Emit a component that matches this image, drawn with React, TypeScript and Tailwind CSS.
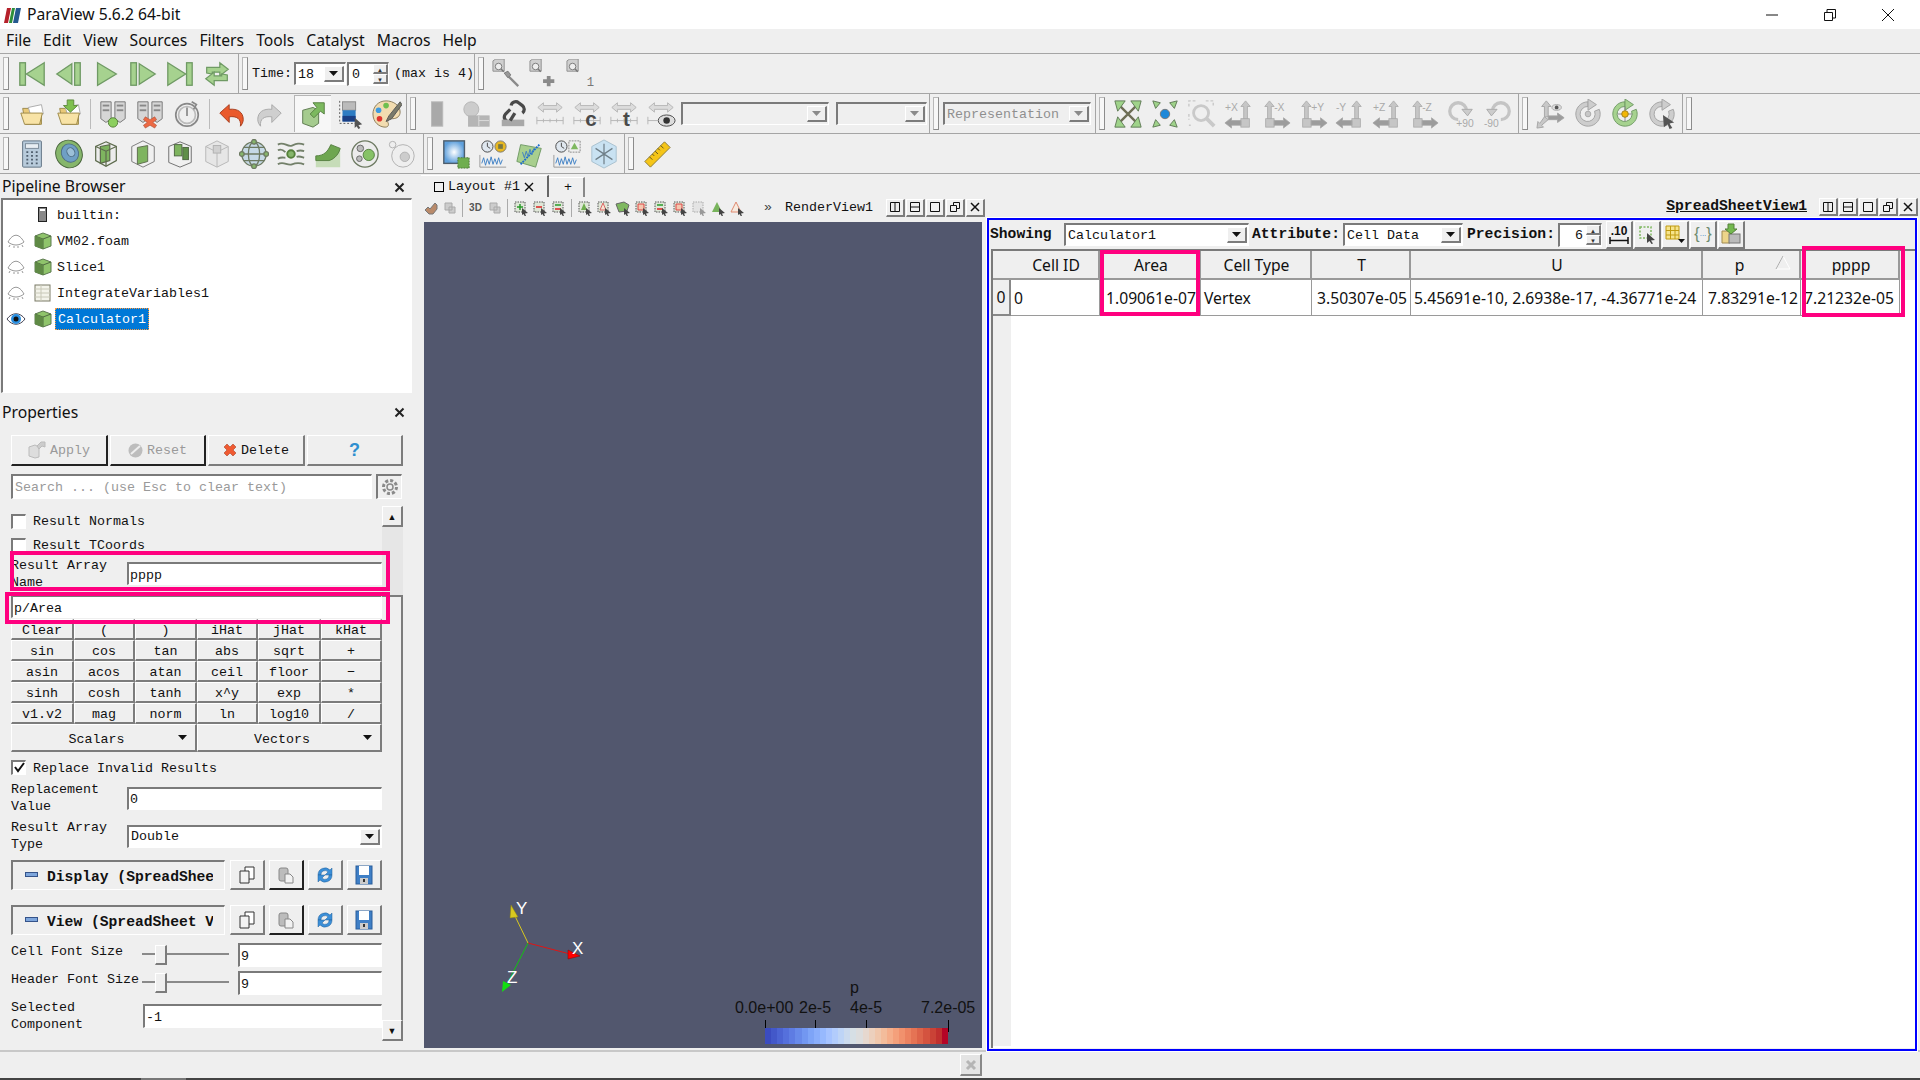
import type { ReactNode } from "react"

const mono = "font-['Liberation_Mono',monospace] text-[13.33px] leading-[17px]"
const boldMono = "font-['Liberation_Mono',monospace] text-[14.67px] font-bold leading-[17px]"
const ui = "font-['Noto_Sans',sans-serif] text-[15.7px]"
const edge = "border-t-2 border-l-2 border-t-[#7a7a7a] border-l-[#7a7a7a] border-r border-b border-r-white border-b-white"
const sunken = `${edge} bg-white`
const raised = "border-t border-l border-t-white border-l-white border-r-2 border-b-2 border-r-[#7c7c7c] border-b-[#7c7c7c] bg-[#efefef]"
const raisedDark = "border-t border-l border-t-white border-l-white border-r-2 border-b-2 border-r-[#222] border-b-[#222] bg-[#efefef]"

const G = "#a6d28f"
const GS = "#6f9a64"
const D = "#cdcdcd"
const DS = "#a2a2a2"

const Svg = ({ children, size = 30 }: { children: ReactNode; size?: number }) => (
  <svg width={size} height={size} viewBox="0 0 32 32">{children}</svg>
)

const Down = ({ color = "#111" }: { color?: string }) => (
  <svg width="9" height="5" viewBox="0 0 9 5"><path d="M0 0h9L4.500 5z" fill={color} /></svg>
)

const Folder = () => (
  <g stroke="#9b8748" strokeWidth="1">
    <path d="M5 10h8l2 3h10v14H8z" fill="#e9c978" />
    <path d="M11 9l14-3 2 10-13 3z" fill="#fff" stroke="#aaa" />
    <path d="M3 15h23l-3 12H7z" fill="#f8e3a6" />
  </g>
)
const Tower = ({ x }: { x: number }) => (
  <g stroke="#757575" fill="#d6d6d6">
    <path d={`M${x} 3h11v18l-5.500 4-5.500-4z`} />
    <rect x={x + 2} y="6" width="7" height="2" fill="#888" stroke="none" />
    <rect x={x + 2} y="11" width="7" height="2" fill="#888" stroke="none" />
  </g>
)
const Cube = ({ fill = "#7eb45f", stroke = "#5d6b4d" }: { fill?: string; stroke?: string }) => (
  <g stroke={stroke} strokeWidth="1.3">
    <path d="M16 3l11 5v15l-11 6-11-6V8z" fill="#ececec" />
    <path d="M10 8l10-2v17l-10 3z" fill={fill} />
    <path d="M5 8l11 5 11-5M16 13v16" fill="none" />
  </g>
)
const Axes = ({ label, flip }: { label: string; flip?: boolean }) => (
  <g fill="#c6c6c6" stroke="#a5a5a5" strokeWidth="0.8">
    <g transform={flip ? "translate(32 0) scale(-1 1)" : undefined}>
      <path d="M7 22V8H4l5-6 5 6h-3v14z" />
      <rect x="5" y="21" width="9" height="9" />
      <path d="M14 23h10v-3l7 5.500-7 5.500v-3H14z" fill="#9c9c9c" />
    </g>
    <text x={flip ? 1 : 14} y="13" fontSize="11" fill="#aaa" stroke="none" fontFamily="Liberation Sans">{label}</text>
  </g>
)
const Range = () => (
  <g fill="#dcdcdc" stroke="#b5b5b5">
    <path d="M3 9l6-5v3h14V4l6 5-6 5v-3H9v3z" />
    <path d="M2 19v8M2 23h28M30 19v8M9 21v4M16 21v4M23 21v4" fill="none" />
  </g>
)
const Ring = ({ color = D, stroke = DS }: { color?: string; stroke?: string }) => (
  <g>
    <path d="M16 3a13 13 0 1 0 12 8l-5 2a8 8 0 1 1-7-5z" fill={color} stroke={stroke} />
    <path d="M16 0l9 6-9 6z" fill={color} stroke={stroke} />
  </g>
)
const Lens = () => (
  <g>
    <path d="M1 2l3-2h9v13H1z" fill="#cfcfcf" stroke="#8f8f8f" />
    <circle cx="7" cy="8" r="3.500" fill="#eee" stroke="#777" />
    <path d="M9.500 10.500l3 3" stroke="#777" strokeWidth="1.500" />
  </g>
)

const icons: Record<string, ReactNode> = {
  first: <g fill={G} stroke={GS} strokeWidth="1.4"><rect x="3" y="4" width="6" height="24" /><path d="M29 4L10 16l19 12z" /></g>,
  back: <g fill={G} stroke={GS} strokeWidth="1.4"><path d="M19 5L3 16l16 11z" /><rect x="22" y="4" width="6" height="24" /></g>,
  play: <path d="M7 4l20 12L7 28z" fill={G} stroke={GS} strokeWidth="1.4" />,
  next: <g fill={G} stroke={GS} strokeWidth="1.4"><rect x="3" y="4" width="6" height="24" /><path d="M12 5l17 11-17 11z" /></g>,
  last: <g fill={G} stroke={GS} strokeWidth="1.4"><path d="M3 4l19 12L3 28z" /><rect x="23" y="4" width="6" height="24" /></g>,
  loop: <g fill={G} stroke={GS} strokeWidth="1.3"><path d="M5 15V9h14V4l9 7-9 7v-4H11v2z" /><path d="M27 17v6H13v5l-9-7 9-7v4h8v-2z" /></g>,
  open: <Folder />,
  load: <g><Folder /><path d="M13 1h7v6h4l-7.500 7L9 7h4z" fill="#7fc04f" stroke="#5d8a3c" /></g>,
  connect: <g><Tower x={3} /><Tower x={18} /><circle cx="16" cy="25" r="5" fill="#8ccf5f" stroke="#55803a" /></g>,
  disconnect: <g><Tower x={3} /><Tower x={18} /><path d="M11 19l5 3 5-3 2 3-4 3 4 3-2 3-5-3-5 3-2-3 4-3-4-3z" fill="#ec6a45" stroke="#a5492e" strokeWidth="0.6" /></g>,
  power: <g fill="none" stroke="#888" strokeWidth="1.8"><circle cx="16" cy="17" r="12" /><circle cx="16" cy="17" r="9" stroke="#bbb" /><path d="M16 9v9" /><path d="M21 3l5 3-3 5" /></g>,
  undo: <path d="M3 15l10-9v5c9-1 15 3 15 11 0 3-2 6-3 7 1-8-4-11-12-10v6z" fill="#ea5a2c" stroke="#a63c1c" />,
  redo: <path d="M29 15L19 6v5c-9-1-15 3-15 11 0 3 2 6 3 7-1-8 4-11 12-10v6z" fill="#cfcfcf" stroke="#a8a8a8" />,
  link: <g><path d="M5 12l11-3 6 3v14l-6 4-11-4z" fill="#a5cb8e" stroke="#5d7a50" /><path d="M16 4h12v12l-4-3-7 7-4-4 7-7z" fill="#7cb95f" stroke="#557f41" /></g>,
  legend: <g><rect x="8" y="3" width="14" height="9" fill="#bbb" stroke="#888" /><rect x="8" y="12" width="14" height="12" fill="#2e7cc3" /><rect x="8" y="18" width="14" height="6" fill="#1b3f85" /><path d="M5 2v24h20" fill="none" stroke="#555" strokeDasharray="2 2" /><path d="M21 20l8 7-4 1 2 3-2 1-2-3-2 2z" fill="#555" /></g>,
  palette: <g><path d="M15 2C6 2 1 9 1 16c0 9 7 14 13 14 4 0 4-3 3-5-1-3 2-4 5-4 5 0 8-3 8-7C30 7 23 2 15 2z" fill="#f2dcb0" stroke="#8a7a58" /><circle cx="7" cy="12" r="3" fill="#3e9be0" /><circle cx="15" cy="7" r="3" fill="#6fbf4f" /><circle cx="8" cy="21" r="3" fill="#e0352f" /><path d="M30 3L18 18l-3 6 6-3L32 6z" fill="#7a7a6a" stroke="#555" /></g>,
  column: <rect x="8" y="3" width="12" height="26" fill="#a9a9a9" stroke="#b9b9b9" />,
  sphereBox: <g fill="#ccc" stroke="#b5b5b5"><circle cx="11" cy="11" r="8" /><rect x="8" y="18" width="22" height="11" fill="#b5b5b5" /><path d="M19 23h11M19 18v11" stroke="#ddd" /></g>,
  broken: <g fill="none" stroke="#4a4a4a" strokeWidth="3.500"><path d="M14 7a5 5 0 0 1 8-3l4 3a5 5 0 0 1 0 8" /><path d="M10 24a5 5 0 0 1-2-8l5-5" /><rect x="4" y="22" width="24" height="7" fill="#a8a8a8" stroke="none" /><path d="M18 15l-5 8" stroke="#4a4a4a" /></g>,
  range: <Range />,
  rangeC: <g><Range /><text x="14" y="29" fontSize="22" fontWeight="bold" fill="#4a4a4a" fontFamily="Liberation Sans">c</text></g>,
  rangeT: <g><Range /><text x="15" y="29" fontSize="22" fontWeight="bold" fill="#4a4a4a" fontFamily="Liberation Sans">t</text></g>,
  rangeEye: <g><path d="M3 9l6-5v3h14V4l6 5-6 5v-3H9v3z" fill="#dcdcdc" stroke="#b5b5b5" /><path d="M2 19v8M2 23h10" stroke="#b5b5b5" /><ellipse cx="22" cy="23" rx="9" ry="6" fill="#ddd" stroke="#444" /><circle cx="22" cy="23" r="3.500" fill="#333" /></g>,
  reset: <g><path d="M6 6l20 20M26 6L6 26" stroke="#6d6d55" strokeWidth="2.500" /><g fill="#9fd38a" stroke="#5f7a55"><path d="M2 2h11l-8 11z" /><path d="M30 2H19l8 11z" /><path d="M2 30h11l-8-11z" /><path d="M30 30H19l8-11z" /></g></g>,
  zoomData: <g><circle cx="16" cy="16" r="5" fill="#1e88d8" stroke="#777" /><g fill="#9fd38a" stroke="#5f7a55"><path d="M3 2l8 2-5 6z" /><path d="M29 2l-8 2 5 6z" /><path d="M3 30l8-2-5-6z" /><path d="M29 30l-8-2 5-6z" /></g></g>,
  zoomBox: <g fill="none" stroke="#c9c9c9"><path d="M2 8V2h7M20 2h8v6M2 16v6M2 28h2" strokeWidth="1.5" strokeDasharray="3 2" /><circle cx="15" cy="15" r="8" strokeWidth="3" /><path d="M21 21l8 8" strokeWidth="4" /></g>,
  xp: <Axes label="+X" flip />,
  xm: <Axes label="-X" />,
  yp: <Axes label="+Y" />,
  ym: <Axes label="-Y" flip />,
  zp: <Axes label="+Z" flip />,
  zm: <Axes label="-Z" />,
  cw: <g><path d="M22 13a9 9 0 1 0-9 9" fill="none" stroke="#c4c4c4" strokeWidth="3.500" /><path d="M17 11h11l-5 7z" fill="#ccc" stroke="#aaa" /><text x="11" y="30" fontSize="11" fill="#aaa" fontFamily="Liberation Sans">+90</text></g>,
  ccw: <g><path d="M10 13a9 9 0 1 1 9 9" fill="none" stroke="#c4c4c4" strokeWidth="3.500" /><path d="M15 11H4l5 7z" fill="#ccc" stroke="#aaa" /><text x="1" y="30" fontSize="11" fill="#aaa" fontFamily="Liberation Sans">-90</text></g>,
  axisEye: <g fill="#c8c8c8" stroke="#a5a5a5"><path d="M9 19V8H6l5-6 5 6h-3v11z" /><path d="M13 18h10v-3l7 5-7 5v-3H13z" fill="#9c9c9c" /><path d="M9 19l4 3-7 6 2 2-7 1 1-7 2 2z" /><ellipse cx="22" cy="9" rx="5" ry="3" fill="#ddd" /><circle cx="22" cy="9" r="2" fill="#555" stroke="none" /></g>,
  center: <g><Ring /><circle cx="16" cy="16" r="3" fill="#c8c8c8" stroke="#aaa" /></g>,
  pick: <g><Ring color={G} stroke={GS} /><path d="M16 8v16M8 16h16" stroke="#888" /><circle cx="16" cy="16" r="3.500" fill="#f2b705" stroke="#a08020" /></g>,
  pickMouse: <g><Ring /><path d="M17 17l12 8-5 1 3 5-3 1-2-5-4 3z" fill="#555" /></g>,
  calc: <g><rect x="6" y="2" width="20" height="28" rx="1" fill="#b8cbdb" stroke="#5d6f80" /><rect x="9" y="5" width="14" height="5" fill="#e8eef3" stroke="#7a8a98" /><path d="M10 14h2M15 14h2M20 14h2M10 18h2M15 18h2M20 18h2M10 22h2M15 22h2M20 22h2M10 26h2M15 26h2M20 26h2" stroke="#4d5d6c" strokeWidth="2" /></g>,
  contour: <g><ellipse cx="16" cy="16" rx="14" ry="15" transform="rotate(-30 16 16)" fill="#86b66b" stroke="#47633b" /><ellipse cx="17" cy="15" rx="9" ry="10" transform="rotate(-30 17 15)" fill="#6f9fc4" stroke="#4f6f86" /><ellipse cx="18" cy="14" rx="4" ry="5" transform="rotate(-30 18 14)" fill="#9cc0d8" stroke="#4f6f86" /></g>,
  clip: <Cube />,
  slice: <g><path d="M16 2l12 6v16l-12 6-12-6V8z" fill="#f0f0f0" stroke="#777" /><path d="M10 9l11-2v17l-11 3z" fill="#7eb45f" stroke="#5d6b4d" /></g>,
  extract: <g><path d="M4 8l12-5 12 5v17l-12 5-12-5z" fill="#f0f0f0" stroke="#6d6d6d" /><rect x="10" y="6" width="8" height="12" fill="#7eb45f" stroke="#4d6640" /><rect x="19" y="9" width="6" height="13" fill="#5f8f48" stroke="#4d6640" /></g>,
  cubeGray: <g><path d="M16 2l12 6v16l-12 6-12-6V8z" fill="#e6e6e6" stroke="#b5b5b5" /><path d="M4 8l12 6 12-6M16 14v16" fill="none" stroke="#b5b5b5" /><rect x="12" y="7" width="8" height="8" fill="#d0d0d0" stroke="#b0b0b0" /></g>,
  globe: <g fill="none" stroke="#6d7a62" strokeWidth="1.400"><circle cx="16" cy="16" r="13" fill="#c6d9e6" /><ellipse cx="16" cy="16" rx="6" ry="13" /><path d="M3 16h26M5 9h22M5 23h22" /><circle cx="16" cy="3" r="2.500" fill="#86b66b" /><circle cx="3" cy="16" r="2.500" fill="#86b66b" /><circle cx="29" cy="16" r="2.500" fill="#86b66b" /><circle cx="16" cy="29" r="2.500" fill="#86b66b" /></g>,
  stream: <g fill="none" stroke="#73806a" strokeWidth="2"><path d="M2 6c6-4 10 3 15 1s8-3 13-1M2 12c4-2 6 0 8 2M22 13c3-1 5-1 8 0M2 21c4-2 6-1 8-1M22 19c3-1 5 0 8 1M2 27c6-4 10 2 15 0s8-2 13 0" /><circle cx="16" cy="16" r="4" fill="#86b66b" stroke="#55803a" /></g>,
  warp: <g><path d="M3 18c9 0 13-5 16-12l10 4v20H3z" fill="#c6dcb8" /><path d="M3 18c9 0 13-5 16-12l10 4c-2 8-8 12-12 13H3z" fill="#6ea650" stroke="#557f41" /></g>,
  group: <g><circle cx="16" cy="16" r="14" fill="#ececec" stroke="#6d7a62" strokeWidth="1.400" /><circle cx="11" cy="10" r="3.500" fill="#bbb" stroke="#666" /><circle cx="20" cy="17" r="6" fill="#86c266" stroke="#557f41" /><circle cx="10" cy="21" r="3" fill="#bbb" stroke="#666" /></g>,
  groupGray: <g fill="#eee" stroke="#b0b0b0"><circle cx="17" cy="18" r="12" /><circle cx="19" cy="19" r="5" fill="#ccc" /><circle cx="6" cy="6" r="3.500" /></g>,
  findData: <g><defs><radialGradient id="sq"><stop offset="0" stopColor="#fff" /><stop offset="1" stopColor="#5fa0dc" /></radialGradient></defs><rect x="3" y="2" width="22" height="24" fill="url(#sq)" stroke="#4d5d6c" strokeWidth="1.500" /><rect x="18" y="20" width="12" height="11" fill="#6fae4f" stroke="#4d7a38" strokeDasharray="2 1" /></g>,
  clockData: <g fill="none"><circle cx="10" cy="8" r="6" fill="#dfe7ef" stroke="#444" /><path d="M10 4v4l3 2" stroke="#444" /><circle cx="24" cy="8" r="6" fill="#e8b820" stroke="#777" /><rect x="21.500" y="5.500" width="5" height="5" fill="#774" /><path d="M2 17v13h28" stroke="#999" /><path d="M4 26l2-6 2 8 2-7 2 6 2-8 2 8 2-6 2 6 2-7 2 7 2-5" stroke="#3d7fc4" /></g>,
  plotLine: <g><path d="M6 6l22 4-6 20L2 24z" fill="#a8cf8e" stroke="#6f9a64" /><path d="M6 27L26 6" stroke="#1d6fd0" strokeWidth="2" strokeDasharray="2 1" /><path d="M8 14l2 6 2-7 2 6 2-8 2 6 2-7" fill="none" stroke="#3d7fc4" /></g>,
  clockSel: <g fill="none"><circle cx="10" cy="8" r="6" fill="#dfe7ef" stroke="#444" /><path d="M10 4v4l3 2" stroke="#444" /><rect x="18" y="2" width="12" height="12" stroke="#888" strokeDasharray="2 1" /><path d="M24 4l4 7h-8z" fill="#7fb860" /><path d="M2 17v13h28" stroke="#999" /><path d="M4 26l2-6 2 8 2-7 2 6 2-8 2 8 2-6 2 6 2-7 2 7 2-5" stroke="#3d7fc4" /></g>,
  ice: <g><path d="M16 1l13 7v16l-13 7-13-7V8z" fill="#c9e2f2" stroke="#a8c0ce" /><path d="M16 5v22M7 10l18 12M25 10L7 22" stroke="#6f7f88" strokeWidth="1.300" /></g>,
  ruler: <g><path d="M24 3l6 6L9 30l-6-6z" fill="#f5c518" stroke="#8a7a3c" /><path d="M20 7l3 3M17 10l2 2M14 13l3 3M11 16l2 2M8 19l3 3" stroke="#5a4f20" /></g>,
  s1: <g><Lens /><path d="M16 17l12 12" stroke="#8a8a8a" strokeWidth="2.500" /><path d="M13 15l4-2 3 4-3 3z" fill="#999" stroke="#777" /></g>,
  s2: <g><Lens /><path d="M21 18v11M15 23.500h12" stroke="#8a8a8a" strokeWidth="4" /></g>,
  s3: <g><Lens /><text x="22" y="29" fontSize="13" fill="#777" fontFamily="Liberation Mono">1</text></g>,
}

const Icon = ({ name, size }: { name: string; size?: number }) => <Svg size={size}>{icons[name]}</Svg>

const Slot = ({ name, active }: { name: string; active?: boolean }) => (
  <span className={`flex h-[37px] w-[37px] shrink-0 items-center justify-center ${active ? "border-t border-l border-[#b5b5b5] bg-[#f7f7f7]" : ""}`}>
    <Icon name={name} />
  </span>
)

const Grip = () => (
  <span className="ml-[3px] mr-[4px] h-[33px] w-[6px] shrink-0 border border-[#b8b8b8] border-b-[#8c8c8c] border-r-[#8c8c8c] bg-[#f7f7f7]" />
)

const Bar = ({ children }: { children: ReactNode }) => (
  <div className="flex h-[40px] shrink-0 items-center border-t border-t-[#a5a5a5] bg-[#efefef]">{children}</div>
)

const Group = ({ w, children }: { w: string; children: ReactNode }) => (
  <div className={`flex h-full shrink-0 items-center border-r border-r-[#a5a5a5] ${w}`}>{children}</div>
)

const Combo = ({ w, text, disabled }: { w: string; text?: string; disabled?: boolean }) => (
  <div className={`flex h-[23px] shrink-0 items-center justify-between pl-[2px] pr-[1px] ${w} ${edge} ${disabled ? "bg-[#efefef]" : "bg-white"}`}>
    <span className={`whitespace-nowrap ${mono} ${disabled ? "text-[#8f8f8f]" : ""}`}>{text}</span>
    <span className={`flex h-[16px] w-[20px] items-center justify-center ${raised}`}>
      <Down color={disabled ? "#8a8a8a" : "#111"} />
    </span>
  </div>
)

const Spin = ({ w, value, right }: { w: string; value: string; right?: boolean }) => (
  <div className={`flex h-[24px] shrink-0 items-center justify-between ${w} ${sunken}`}>
    <span className={`${mono} ${right ? "ml-auto mr-[3px]" : "ml-[3px]"}`}>{value}</span>
    <span className="flex w-[15px] flex-col text-[6px] leading-[10px] text-[#333]">
      <span className={`h-[10px] text-center ${raised} border-r border-b`}>▲</span>
      <span className={`h-[10px] text-center ${raised} border-r border-b`}>▼</span>
    </span>
  </div>
)

const TitleBar = () => (
  <div className="flex h-[29px] shrink-0 items-center bg-white">
    <svg width="20" height="20" viewBox="0 0 20 20" className="ml-[2px]">
      <path d="M2 18L5 3h4L6 18z" fill="#b5202a" />
      <path d="M7 18l3-15h3l-3 15z" fill="#2f8f3a" />
      <path d="M11 18l3-15h5l-3 15z" fill="#25598f" />
    </svg>
    <span className={`ml-[5px] ${ui}`}>ParaView 5.6.2 64-bit</span>
    <div className="ml-auto flex items-center">
      <span className="flex w-[58px] justify-center"><svg width="12" height="12"><path d="M0 6h12" stroke="#111" /></svg></span>
      <span className="flex w-[58px] justify-center"><svg width="12" height="12"><path d="M.5 3.500h8v8h-8zM3 3V.5h8.500V9H9" fill="none" stroke="#111" /></svg></span>
      <span className="mr-[3px] flex w-[58px] justify-center"><svg width="14" height="14"><path d="M1 1l12 12M13 1L1 13" stroke="#111" /></svg></span>
    </div>
  </div>
)

const MenuBar = () => (
  <div className={`flex h-[24px] shrink-0 items-center gap-[12px] bg-[#efefef] pl-[6px] ${ui}`}>
    {["File", "Edit", "View", "Sources", "Filters", "Tools", "Catalyst", "Macros", "Help"].map((m) => <span key={m}>{m}</span>)}
  </div>
)

const Toolbars = () => (
  <>
    <Bar>
      <Group w="w-[239px]">
        <Grip />
        {["first", "back", "play", "next", "last", "loop"].map((n) => <Slot key={n} name={n} />)}
      </Group>
      <Group w="w-[236px]">
        <Grip />
        <span className={`mr-[2px] ${mono}`}>Time:</span>
        <Combo w="w-[52px]" text="18" />
        <span className="w-[3px]" />
        <Spin w="w-[42px]" value="0" />
        <span className={`ml-[5px] whitespace-nowrap ${mono}`}>(max is 4)</span>
      </Group>
      <div className="flex h-full items-center">
        <Grip />
        <Slot name="s1" />
        <Slot name="s2" />
        <Slot name="s3" />
      </div>
    </Bar>
    <Bar>
      <Group w="w-[407px]">
        <Grip />
        <span className="w-px" />
        <Slot name="open" />
        <Slot name="load" />
        <span className="ml-[2px] mr-[3px] h-[30px] w-px bg-[#bbb]" />
        <Slot name="connect" />
        <Slot name="disconnect" />
        <Slot name="power" />
        <span className="ml-[4px] mr-[3px] h-[30px] w-px bg-[#bbb]" />
        <Slot name="undo" />
        <Slot name="redo" />
        <span className="w-[7px]" />
        <Slot name="link" active />
        <Slot name="legend" />
        <Slot name="palette" />
      </Group>
      <Group w="w-[523px]">
        <Grip />
        {["column", "sphereBox", "broken", "range", "rangeC", "rangeT", "rangeEye"].map((n) => <Slot key={n} name={n} />)}
        <span className="w-[2px]" />
        <Combo w="w-[148px]" disabled />
        <span className="w-[7px]" />
        <Combo w="w-[91px]" disabled />
      </Group>
      <Group w="w-[166px]">
        <Grip />
        <Combo w="w-[148px]" text="Representation" disabled />
      </Group>
      <Group w="w-[423px]">
        <Grip />
        {["reset", "zoomData", "zoomBox", "xp", "xm", "yp", "ym", "zp", "zm", "cw", "ccw"].map((n) => <Slot key={n} name={n} />)}
      </Group>
      <Group w="w-[164px]">
        <Grip />
        {["axisEye", "center", "pick", "pickMouse"].map((n) => <Slot key={n} name={n} />)}
      </Group>
      <Grip />
    </Bar>
    <Bar>
      <Group w="w-[424px]">
        <Grip />
        {["calc", "contour", "clip", "slice", "extract", "cubeGray", "globe", "stream", "warp", "group", "groupGray"].map((n) => <Slot key={n} name={n} />)}
      </Group>
      <Group w="w-[201px]">
        <Grip />
        {["findData", "clockData", "plotLine", "clockSel", "ice"].map((n) => <Slot key={n} name={n} />)}
      </Group>
      <Grip />
      <Slot name="ruler" />
    </Bar>
    <div className="h-px shrink-0 bg-[#a5a5a5]" />
  </>
)

const Eye = ({ open }: { open?: boolean }) =>
  open ? (
    <svg width="20" height="14" viewBox="0 0 20 14" className="shrink-0">
      <path d="M1 7c5-7 13-7 18 0-5 7-13 7-18 0z" fill="#fff" stroke="#445" />
      <circle cx="10" cy="7" r="5" fill="#2a8fe0" />
      <circle cx="10" cy="7" r="2.500" fill="#111" />
    </svg>
  ) : (
    <svg width="20" height="14" viewBox="0 0 20 14" className="shrink-0">
      <path d="M2 8c5-9 11-9 16 0M2 8c5 4 11 4 16 0M4 11l-1 2M8 12v2M12 12v2M16 11l1 2" fill="none" stroke="#999" />
    </svg>
  )

const TreeCube = () => (
  <svg width="18" height="18" viewBox="0 0 18 18">
    <path d="M9 1l8 3v10l-8 3-8-3V4z" fill="#8fc46b" stroke="#5d7a50" />
    <path d="M1 4l8 3 8-3M9 7v10" fill="none" stroke="#4f6a42" />
    <path d="M1 4l8 3v10l-8-3z" fill="#5f8a45" />
  </svg>
)

const Tree = () => {
  const rows = [
    { name: "builtin:", kind: "server" },
    { name: "VM02.foam", kind: "cube", eye: "closed" },
    { name: "Slice1", kind: "cube", eye: "closed" },
    { name: "IntegrateVariables1", kind: "table", eye: "closed" },
    { name: "Calculator1", kind: "cube", eye: "open", selected: true },
  ]
  return (
    <div className={`mx-[1px] h-[195px] pt-[2px] ${sunken}`}>
      {rows.map((r) => (
        <div key={r.name} className="flex h-[26px] items-center">
          <span className="ml-[1px] flex w-[24px] justify-center">
            {r.eye ? <Eye open={r.eye === "open"} /> : null}
          </span>
          <span className="ml-[6px] flex w-[18px] justify-center">
            {r.kind === "cube" ? <TreeCube /> : null}
            {r.kind === "server" ? (
              <svg width="10" height="16" viewBox="0 0 10 16"><rect x=".5" y=".5" width="8" height="14" fill="#888" stroke="#222" /><rect x="2" y="2" width="5" height="2" fill="#fff" /></svg>
            ) : null}
            {r.kind === "table" ? (
              <svg width="18" height="18" viewBox="0 0 18 18"><rect x="1" y="1" width="15" height="16" fill="#f3f3ea" stroke="#7a7a66" /><path d="M1 5h15M1 9h15M1 13h15M7 1v16" stroke="#c8c8b8" /></svg>
            ) : null}
          </span>
          <span className={`ml-[3px] flex h-[22px] items-center px-[2px] ${mono} ${r.selected ? "border border-dotted border-[#ff9a3c] bg-[#0078d7] text-white" : ""}`}>{r.name}</span>
        </div>
      ))}
    </div>
  )
}

const PanelHead = ({ title, h }: { title: string; h: string }) => (
  <div className={`flex items-center justify-between pl-[2px] pr-[8px] ${h} ${ui}`}>
    <span>{title}</span>
    <svg width="11" height="11"><path d="M1.500 1.500l8 8M9.500 1.500l-8 8" stroke="#222" strokeWidth="2" /></svg>
  </div>
)

const ActionButtons = () => (
  <div className="ml-[11px] mt-[10px] flex h-[31px] w-[392px] gap-[2px]">
    <div className={`flex w-[97px] items-center justify-center gap-[4px] ${raisedDark}`}>
      <svg width="18" height="18" viewBox="0 0 18 18"><path d="M1 6l6-2 4 2v10l-4 1-6-2z" fill="#ddd" stroke="#bbb" /><path d="M9 5l4-4h4v5l-3-1-3 3z" fill="#ccc" stroke="#bbb" /></svg>
      <span className={`${mono} text-[#9a9a9a]`}>Apply</span>
    </div>
    <div className={`flex w-[96px] items-center justify-center gap-[4px] ${raisedDark}`}>
      <svg width="15" height="15" viewBox="0 0 15 15"><circle cx="7.500" cy="7.500" r="7" fill="#bdbdbd" /><path d="M3 11l9-8" stroke="#eee" strokeWidth="2" /></svg>
      <span className={`${mono} text-[#9a9a9a]`}>Reset</span>
    </div>
    <div className={`flex w-[97px] items-center justify-center gap-[4px] ${raised}`}>
      <svg width="14" height="14" viewBox="0 0 14 14"><path d="M1 4l3-3 3 3 3-3 3 3-3 3 3 3-3 3-3-3-3 3-3-3 3-3z" fill="#f05a32" stroke="#a94528" strokeWidth=".6" /></svg>
      <span className={mono}>Delete</span>
    </div>
    <div className={`flex w-[96px] items-center justify-center ${raised}`}>
      <span className="font-['Liberation_Sans',sans-serif] text-[18px] font-bold leading-none text-[#2f8fd0]">?</span>
    </div>
  </div>
)

const Check = ({ on }: { on?: boolean }) => (
  <span className={`flex h-[15px] w-[15px] shrink-0 items-center justify-center ${sunken}`}>
    {on ? <svg width="11" height="11"><path d="M1 5l3 4 6-8" fill="none" stroke="#111" strokeWidth="2" /></svg> : null}
  </span>
)

const Field = ({ w, value, h = "h-[23px]" }: { w: string; value: string; h?: string }) => (
  <div className={`flex shrink-0 items-center pl-[1px] pt-[2px] ${h} ${w} ${sunken} ${mono}`}>{value}</div>
)

const CalcGrid = () => {
  const rows = [
    ["Clear", "(", ")", "iHat", "jHat", "kHat"],
    ["sin", "cos", "tan", "abs", "sqrt", "+"],
    ["asin", "acos", "atan", "ceil", "floor", "−"],
    ["sinh", "cosh", "tanh", "x^y", "exp", "*"],
    ["v1.v2", "mag", "norm", "ln", "log10", "/"],
  ]
  return (
    <div className="mt-[1px]">
      <div className="grid w-[371px] grid-cols-[63px_61px_62px_61px_63px_61px]">
        {rows.flat().map((k, i) => (
          <div key={i} className={`flex h-[21px] items-center justify-center pt-[2px] ${raised} ${mono}`}>{k}</div>
        ))}
      </div>
      <div className="grid w-[371px] grid-cols-[186px_185px]">
        {["Scalars", "Vectors"].map((k) => (
          <div key={k} className={`relative flex h-[28px] items-center justify-center pr-[14px] pt-[3px] ${raised} ${mono}`}>
            {k}
            <span className="absolute right-[8px] top-[10px] flex"><Down /></span>
          </div>
        ))}
      </div>
    </div>
  )
}

const Label = ({ children, w }: { children: ReactNode; w: string }) => (
  <div className={`shrink-0 ${w} ${mono}`}>{children}</div>
)

const SectionRow = ({ title, mt }: { title: string; mt: string }) => (
  <div className={`flex h-[30px] w-[371px] ${mt}`}>
    <div className={`flex w-[214px] shrink-0 items-center overflow-hidden pb-[2px] ${edge}`}>
      <span className="ml-[12px] mr-[9px] h-[5px] w-[13px] shrink-0 border border-[#35538a] bg-[#7ea6dc]" />
      <span className="w-[166px] overflow-hidden whitespace-pre">
        <span className={boldMono}>{title}</span>
      </span>
    </div>
    <div className="ml-[5px] flex gap-[4px]">
      <span className={`flex w-[35px] items-center justify-center ${raised}`}>
        <svg width="18" height="18" viewBox="0 0 18 18"><path d="M7 1h9v12H7z" fill="#fff" stroke="#333" /><path d="M2 5h9v12H2z" fill="#f2f2f2" stroke="#333" /></svg>
      </span>
      <span className={`flex w-[35px] items-center justify-center ${raisedDark}`}>
        <svg width="18" height="18" viewBox="0 0 18 18"><rect x="2" y="2" width="9" height="13" rx="2" fill="#bcbcbc" stroke="#888" /><path d="M8 8h5l3 3v6H8z" fill="#f2f2f2" stroke="#888" /></svg>
      </span>
      <span className={`flex w-[35px] items-center justify-center ${raised}`}>
        <svg width="20" height="20" viewBox="0 0 20 20"><path d="M3 10a7 7 0 0 1 12-5l2-2v7h-7l3-3a4 4 0 0 0-7 3z" fill="#3b8fd8" stroke="#24609a" strokeWidth=".5" /><path d="M17 10a7 7 0 0 1-12 5l-2 2v-7h7l-3 3a4 4 0 0 0 7-3z" fill="#3b8fd8" stroke="#24609a" strokeWidth=".5" /></svg>
      </span>
      <span className={`flex w-[35px] items-center justify-center ${raised}`}>
        <svg width="18" height="20" viewBox="0 0 18 20"><rect x="1" y="1" width="16" height="18" fill="#3f7fc6" stroke="#2b5f9c" /><rect x="4" y="1" width="10" height="9" fill="#fff" /><rect x="5" y="13" width="8" height="6" fill="#ccc" /><rect x="8" y="14" width="2" height="3" fill="#333" /></svg>
      </span>
    </div>
  </div>
)

const Slider = () => (
  <div className="relative ml-[5px] h-[20px] w-[87px] shrink-0">
    <div className="absolute left-0 right-0 top-[8px] h-[3px] border-t-2 border-[#8a8a8a]" />
    <div className={`absolute left-[13px] top-0 h-[20px] w-[12px] ${raised}`} />
  </div>
)

const Scrollbar = () => (
  <div className="mr-[11px] flex h-[535px] w-[21px] shrink-0 flex-col">
    <div className={`flex h-[21px] items-center justify-center text-[9px] leading-none ${raised}`}>▲</div>
    <div className="h-[68px] bg-[radial-gradient(#ffffff_0.5px,#e6e6e6_0.5px)] bg-[length:2px_2px]" />
    <div className="flex-1 border-r-2 border-t-2 border-[#7c7c7c] bg-[#efefef]" />
    <div className={`flex h-[21px] items-center justify-center text-[9px] leading-none ${raised}`}>▼</div>
  </div>
)

const PinkBox = ({ className }: { className: string }) => (
  <div className={`pointer-events-none absolute border-[4px] border-[#ff007f] ${className}`} />
)

const Properties = () => (
  <div>
    <PanelHead title="Properties" h="mt-[7px] h-[25px]" />
    <ActionButtons />
    <div className="ml-[11px] mt-[8px] flex h-[26px] w-[392px] gap-[4px]">
      <div className={`flex h-[25px] w-[361px] items-center pl-[2px] ${sunken} ${mono} text-[#9a9a9a]`}>Search ... (use Esc to clear text)</div>
      <div className={`flex h-[25px] w-[26px] items-center justify-center bg-[#efefef] ${edge}`}>
        <svg width="20" height="20" viewBox="0 0 20 20" fill="none" stroke="#8a8a8a" strokeWidth="1.500"><circle cx="10" cy="10" r="3" /><circle cx="10" cy="10" r="6.500" strokeDasharray="3 2" strokeWidth="3" /></svg>
      </div>
    </div>
    <div className="mt-[6px] flex">
      <div className="relative ml-[11px] h-[545px] w-[371px] shrink-0">
        <div className={`flex h-[24px] items-center gap-[6px] pt-[6px] ${mono}`}><Check /><span className="ml-[1px]">Result Normals</span></div>
        <div className={`flex h-[24px] items-center gap-[6px] pt-[6px] ${mono}`}><Check /><span className="ml-[1px]">Result TCoords</span></div>
        <div className="flex h-[39px] items-center">
          <Label w="w-[116px]">Result Array Name</Label>
          <Field w="w-[255px]" value="pppp" />
        </div>
        <div className="mt-[2px]"><Field w="w-[371px]" value="p/Area" /></div>
        <CalcGrid />
        <div className={`mt-[3px] flex h-[24px] items-center gap-[6px] ${mono}`}><Check on /><span className="ml-[1px] mt-[2px]">Replace Invalid Results</span></div>
        <div className="mt-[1px] flex h-[36px] items-center">
          <Label w="w-[116px]">Replacement Value</Label>
          <Field w="w-[255px]" value="0" />
        </div>
        <div className="mt-[2px] flex h-[36px] items-center">
          <Label w="w-[116px]">Result Array Type</Label>
          <Combo w="w-[255px]" text="Double" />
        </div>
        <SectionRow title="Display (SpreadSheet Representation)" mt="mt-[6px]" />
        <SectionRow title="View (SpreadSheet View)" mt="mt-[15px]" />
        <div className="mt-[8px] flex h-[24px] items-center">
          <Label w="-mt-[8px] w-[126px] whitespace-nowrap">Cell Font Size</Label>
          <Slider />
          <Field w="w-[144px]" value="9" h="ml-[9px] h-[24px]" />
        </div>
        <div className="mt-[4px] flex h-[24px] items-center">
          <Label w="-mt-[8px] w-[126px] whitespace-nowrap">Header Font Size</Label>
          <Slider />
          <Field w="w-[144px]" value="9" h="ml-[9px] h-[24px]" />
        </div>
        <div className="mt-[9px] flex h-[24px] items-center">
          <Label w="w-[132px]">Selected Component</Label>
          <Field w="w-[239px]" value="-1" h="h-[24px]" />
        </div>
        <PinkBox className="-left-[1px] top-[45px] h-[40px] w-[380px]" />
        <PinkBox className="-left-[6px] top-[86px] h-[32px] w-[385px]" />
      </div>
      <Scrollbar />
    </div>
  </div>
)

const LeftPanel = () => (
  <div className="w-[413px] shrink-0">
    <PanelHead title="Pipeline Browser" h="h-[24px] pt-[2px]" />
    <Tree />
    <Properties />
  </div>
)

const Small = ({ kind }: { kind: string }) => {
  const dash = <rect x="2" y="2" width="10" height="10" fill="#dfe7d8" stroke="#555" strokeDasharray="1.500 1" />
  const cursor = <path d="M9 8l6 5-3 .5 1 2.500-1 .5-1.500-2.500L9 15z" fill="#444" />
  return (
    <span className="flex w-[19px] shrink-0 justify-center">
      <svg width="16" height="16" viewBox="0 0 16 16">
        {kind === "a" ? <path d="M2 10l3-3 2 2 5-6 2 2v4l-4 5H6z" fill="#b98a6a" stroke="#777" /> : null}
        {kind === "b" ? <path d="M3 3h7v7H3zM7 7h6v6H7z" fill="#ccc" stroke="#aaa" /> : null}
        {kind === "add" ? <g>{dash}<path d="M4 7h6M7 4v6" stroke="#2a9a2a" strokeWidth="1.500" />{cursor}</g> : null}
        {kind === "sub" ? <g>{dash}<path d="M4 7h6" stroke="#d22" strokeWidth="1.500" />{cursor}</g> : null}
        {kind === "int" ? <g>{dash}<path d="M4 5h6" stroke="#2a9a2a" strokeWidth="1.500" /><path d="M4 9h6" stroke="#d22" strokeWidth="1.500" />{cursor}</g> : null}
        {kind === "pts" ? <g>{dash}<path d="M7 3l3 7H4z" fill="#6fae4f" />{cursor}</g> : null}
        {kind === "ptsr" ? <g>{dash}<path d="M7 3l3 7H4z" fill="#f4e4d4" stroke="#d66" />{cursor}</g> : null}
        {kind === "cells" ? <g><path d="M1 4l8-2 5 3-2 6-8 1z" fill="#7fb860" stroke="#666" />{cursor}</g> : null}
        {kind === "red" ? <g>{dash}<path d="M4 4h6v6H4z" fill="#f4c8b0" stroke="#d44" />{cursor}</g> : null}
        {kind === "tri" ? <g><path d="M7 2l5 10H2z" fill="#78b45c" />{cursor}</g> : null}
        {kind === "trir" ? <g><path d="M7 2l5 10H2z" fill="#f6eadf" stroke="#e08a70" />{cursor}</g> : null}
        {kind === "gray" ? <g><rect x="2" y="2" width="10" height="10" fill="#e4e4e4" stroke="#aaa" strokeDasharray="1.500 1" /><path d="M9 8l6 5-3 .5 1 2.500-1 .5-1.500-2.500L9 15z" fill="#999" /></g> : null}
      </svg>
    </span>
  )
}

const Sep = () => <span className="mx-[3px] h-[18px] w-px shrink-0 bg-[#aaa]" />

const ViewBtn = ({ kind }: { kind: string }) => (
  <span className={`flex h-[18px] w-[19px] shrink-0 items-center justify-center ${raised}`}>
    <svg width="12" height="12" viewBox="0 0 12 12" fill="none" stroke="#111">
      {kind === "h" ? <path d="M1.500 1.500h9v9h-9zM6 1.500v9" /> : null}
      {kind === "v" ? <path d="M1.500 1.500h9v9h-9zM1.500 6h9" /> : null}
      {kind === "m" ? <path d="M1.500 1.500h9v9h-9z" /> : null}
      {kind === "p" ? <path d="M1.500 4.500h6v6h-6zM4.500 4V1.500h6v6H8" /> : null}
      {kind === "x" ? <path d="M2 2l8 8M10 2l-8 8" strokeWidth="1.500" /> : null}
    </svg>
  </span>
)

const ramp = ["#3b4cc0", "#4358c9", "#4c64d3", "#5570dc", "#5e7ce3", "#688aea", "#7297f1", "#7ea4f7", "#8aaefb", "#97b9fe", "#a6c3ff", "#b2ccfc", "#bed4f6", "#cbdaee", "#d6dfe5", "#dddddd", "#e6d8cf", "#ecd0bd", "#f0c7ac", "#f3bc9b", "#f5ae8a", "#f4a07b", "#f1916d", "#ec8260", "#e57354", "#dd6349", "#d4533f", "#ca4236", "#c0302e", "#b40426"]

const Canvas = () => (
  <div className="relative ml-[4px] h-[826px] w-[558px] bg-[#52576e]">
    <svg width="100" height="110" viewBox="0 0 100 110" className="absolute left-[74px] top-[680px]">
      <path d="M30 41L16 12" stroke="#d8c81e" />
      <path d="M30 41L72 52" stroke="#e01414" />
      <path d="M30 41L6 88" stroke="#12c412" />
      <path d="M12 16l1-13 7 12z" fill="#d8c81e" stroke="#8a8015" strokeWidth=".5" />
      <path d="M70 48l12 6-12 3z" fill="#f00" stroke="#800" strokeWidth=".5" />
      <path d="M4 90l1-11 8 4z" fill="#12e012" />
      <text x="18" y="12" fontSize="17" fill="#fff" fontFamily="Liberation Sans">Y</text>
      <text x="74" y="52" fontSize="17" fill="#fff" fontFamily="Liberation Sans">X</text>
      <text x="9" y="81" fontSize="17" fill="#fff" fontFamily="Liberation Sans">Z</text>
    </svg>
    <div className="absolute left-[341px] top-[757px] w-[183px]">
      <div className="whitespace-nowrap font-['Liberation_Sans',sans-serif] text-[16px] leading-[20px] text-[#111]">
        <span className="absolute left-[85px] -top-[1px]">p</span>
        <span className="absolute -left-[30px] top-[19px]">0.0e+00</span>
        <span className="absolute left-[34px] top-[19px]">2e-5</span>
        <span className="absolute left-[85px] top-[19px]">4e-5</span>
        <span className="absolute left-[156px] top-[19px]">7.2e-05</span>
      </div>
      <div className="absolute left-0 top-[41px] h-[12px] w-px bg-black" />
      <div className="absolute left-[50px] top-[41px] h-[12px] w-px bg-black" />
      <div className="absolute left-[101px] top-[41px] h-[12px] w-px bg-black" />
      <div className="absolute left-[183px] top-[41px] h-[12px] w-px bg-black" />
      <div className="absolute left-0 top-[49px] flex h-[16px] w-[183px]">
        {ramp.map((c) => <span key={c} className="flex-1" style={{ backgroundColor: c }} />)}
      </div>
    </div>
  </div>
)

const MiddlePanel = () => (
  <div className="ml-[7px] w-[566px] shrink-0">
    <div className="flex h-[23px] items-end">
      <div className={`ml-[1px] flex h-[22px] w-[128px] items-center border-t border-r-2 border-t-white border-r-[#666] pl-[13px] ${mono}`}>
        <span className="mr-[4px] h-[10px] w-[10px] border border-black" />
        Layout #1
        <svg width="10" height="10" className="ml-[4px]"><path d="M1 1l8 8M9 1l-8 8" stroke="#111" strokeWidth="1.400" /></svg>
      </div>
      <div className={`flex h-[20px] w-[36px] items-center justify-center border-t border-r-2 border-t-white border-r-[#888] pl-[4px] ${mono}`}>+</div>
    </div>
    <div className="flex h-[25px] items-center pb-[4px] pl-[1px]">
      <Small kind="a" /><Small kind="b" />
      <Sep />
      <span className="w-[19px] text-center font-['Liberation_Sans',sans-serif] text-[10px] font-bold text-[#555]">3D</span>
      <Small kind="b" />
      <Sep />
      <Small kind="add" /><Small kind="sub" /><Small kind="int" />
      <Sep />
      <Small kind="pts" /><Small kind="ptsr" /><Small kind="cells" /><Small kind="red" /><Small kind="int" /><Small kind="red" /><Small kind="gray" /><Small kind="tri" /><Small kind="trir" />
      <span className={`ml-[18px] w-[18px] ${mono} text-[#444]`}>»</span>
      <span className={`ml-[3px] ${mono}`}>RenderView1</span>
      <div className="ml-auto mr-[1px] flex gap-px">
        {["h", "v", "m", "p", "x"].map((k) => <ViewBtn key={k} kind={k} />)}
      </div>
    </div>
    <Canvas />
  </div>
)

const cols = [
  { head: "Cell ID", cell: "0", w: "w-[89px]", pl: "pl-[3px]", hp: "pl-[3px]" },
  { head: "Area", cell: "1.09061e-07", w: "w-[101px]", pl: "pl-[6px]", hp: "pl-[3px]" },
  { head: "Cell Type", cell: "Vertex", w: "w-[111px]", pl: "pl-[3px]", hp: "pl-[2px]" },
  { head: "T", cell: "3.50307e-05", w: "w-[99px]", pl: "pl-[5px]", hp: "pl-[2px]" },
  { head: "U", cell: "5.45691e-10, 2.6938e-17, -4.36771e-24", w: "w-[292px]", pl: "pl-[3px]", hp: "pl-[2px]" },
  { head: "p", cell: "7.83291e-12", w: "w-[98px]", pl: "pl-[5px]", hp: "pr-[23px]", sort: true },
  { head: "pppp", cell: "7.21232e-05", w: "w-[99px]", pl: "pl-[3px]", hp: "pl-[3px]" },
]

const SheetTools = () => (
  <div className="ml-[4px] flex h-[28px]">
    <span className={`flex w-[27px] flex-col items-center justify-center ${raised}`}>
      <span className="font-['Liberation_Sans',sans-serif] text-[12px] font-bold leading-[12px]">.10</span>
      <svg width="20" height="7"><path d="M1 0v7M19 0v7M1 3.500h18" stroke="#111" strokeWidth="1.500" /></svg>
    </span>
    <span className={`ml-px flex w-[27px] items-center justify-center ${raised}`}>
      <svg width="20" height="20" viewBox="0 0 20 20"><rect x="3" y="3" width="11" height="11" fill="none" stroke="#7fb860" strokeWidth="1.500" strokeDasharray="2 1.500" /><path d="M10 9l8 7-4 .5 2 3-1.500 .5-2-3-2.500 2z" fill="#444" /></svg>
    </span>
    <span className={`ml-px flex w-[27px] items-center justify-center ${raised}`}>
      <svg width="22" height="20" viewBox="0 0 22 20"><path d="M2 2h13v13H2zM2 6.500h13M2 11h13M6.500 2v13M11 2v13" fill="#f6e48c" stroke="#c09a10" /><path d="M14 15h7l-3.500 4z" fill="#111" /></svg>
    </span>
    <span className={`ml-px flex w-[27px] items-center justify-center font-['Liberation_Sans',sans-serif] text-[16px] text-[#6d8a6d] ${raised}`}>
      {"{"}<span className="text-[8px] text-[#3b7fc4]">...</span>{"}"}
    </span>
    <span className={`ml-px flex w-[27px] items-center justify-center ${raised}`}>
      <svg width="22" height="22" viewBox="0 0 22 22"><path d="M2 8h8v12H2z" fill="#ecd48a" stroke="#a08a50" /><rect x="9" y="11" width="11" height="9" fill="#bbb" stroke="#777" /><path d="M8 1h6v5h3l-6 5-6-5h3z" fill="#74b94f" stroke="#55803a" /></svg>
    </span>
  </div>
)

const RightPanel = () => (
  <div className="ml-[1px] w-[932px] shrink-0">
    <div className="flex h-[44px] items-start justify-end pt-[24px]">
      <span className={`mr-[12px] ${boldMono} underline`}>SpreadSheetView1</span>
      <div className="mr-[1px] flex gap-px">
        {["h", "v", "m", "p", "x"].map((k) => <ViewBtn key={k} kind={k} />)}
      </div>
    </div>
    <div className="relative h-[833px] w-[930px] border-[2px] border-[#0000ff] bg-[#efefef] outline outline-white">
      <div className="flex h-[29px] items-center pl-[1px]">
        <span className={`w-[74px] ${boldMono}`}>Showing</span>
        <Combo w="w-[185px]" text="Calculator1" />
        <span className={`ml-[3px] w-[91px] ${boldMono}`}>Attribute:</span>
        <Combo w="w-[120px]" text="Cell Data" />
        <span className={`ml-[4px] w-[91px] ${boldMono}`}>Precision:</span>
        <Spin w="w-[44px]" value="6" right />
        <SheetTools />
      </div>
      <div className="ml-[2px] h-[799px] border-t-2 border-l-2 border-t-[#7a7a7a] border-l-[#7a7a7a] bg-white">
        <div className="flex h-[29px] bg-[#efefef]">
          <div className="w-[18px] shrink-0 border-b-2 border-b-[#999]" />
          {cols.map((c) => (
            <div key={c.head} className={`relative flex shrink-0 items-center justify-center border-r-2 border-b-2 border-r-[#999] border-b-[#999] pt-[3px] ${c.w} ${c.hp} ${ui}`}>
              {c.head}
              {c.sort ? (
                <svg width="16" height="16" className="absolute right-[8px] top-[4px]"><path d="M8 1L1 14h14z" fill="none" stroke="#fff" /><path d="M8 1L1 14" stroke="#aaa" /></svg>
              ) : null}
            </div>
          ))}
        </div>
        <div className="flex h-[36px]">
          <div className={`flex w-[18px] shrink-0 items-center justify-center border-r-2 border-b-2 border-r-[#888] border-b-[#888] bg-[#efefef] pt-[2px] ${ui}`}>0</div>
          {cols.map((c) => (
            <div key={c.head} className={`flex shrink-0 items-center whitespace-nowrap border-r border-b border-[#9a9a9a] pt-[2px] ${c.w} ${c.pl} ${ui}`}>{c.cell}</div>
          ))}
        </div>
        <div className="h-[730px] w-[18px] bg-[#efefef]" />
      </div>
      <PinkBox className="left-[111px] top-[30px] h-[66px] w-[100px]" />
      <PinkBox className="left-[813px] top-[26px] h-[71px] w-[103px]" />
    </div>
  </div>
)

const StatusBar = () => (
  <div className="flex h-[28px] shrink-0 items-center justify-end border-t-2 border-t-[#c8c8c8] bg-[#efefef]">
    <div className="mr-[938px] flex h-[22px] w-[22px] items-center justify-center border-t border-l border-[#fff] border-r-2 border-b-2 border-r-[#888] border-b-[#888] bg-[#e4e4e4]">
      <svg width="12" height="12" viewBox="0 0 12 12"><path d="M2 2l8 8M10 2l-8 8" stroke="#b5b5b5" strokeWidth="3" /></svg>
    </div>
  </div>
)

export default function App() {
  return (
    <div className="flex h-[1080px] w-[1920px] flex-col overflow-hidden bg-[#efefef] text-[#111]">
      <TitleBar />
      <MenuBar />
      <Toolbars />
      <div className="flex min-h-0 flex-1">
        <LeftPanel />
        <MiddlePanel />
        <RightPanel />
      </div>
      <StatusBar />
      <div className="flex h-[2px] shrink-0 bg-[#444]">
        <span className="ml-[141px] w-[45px] bg-[#777]" />
      </div>
    </div>
  )
}
